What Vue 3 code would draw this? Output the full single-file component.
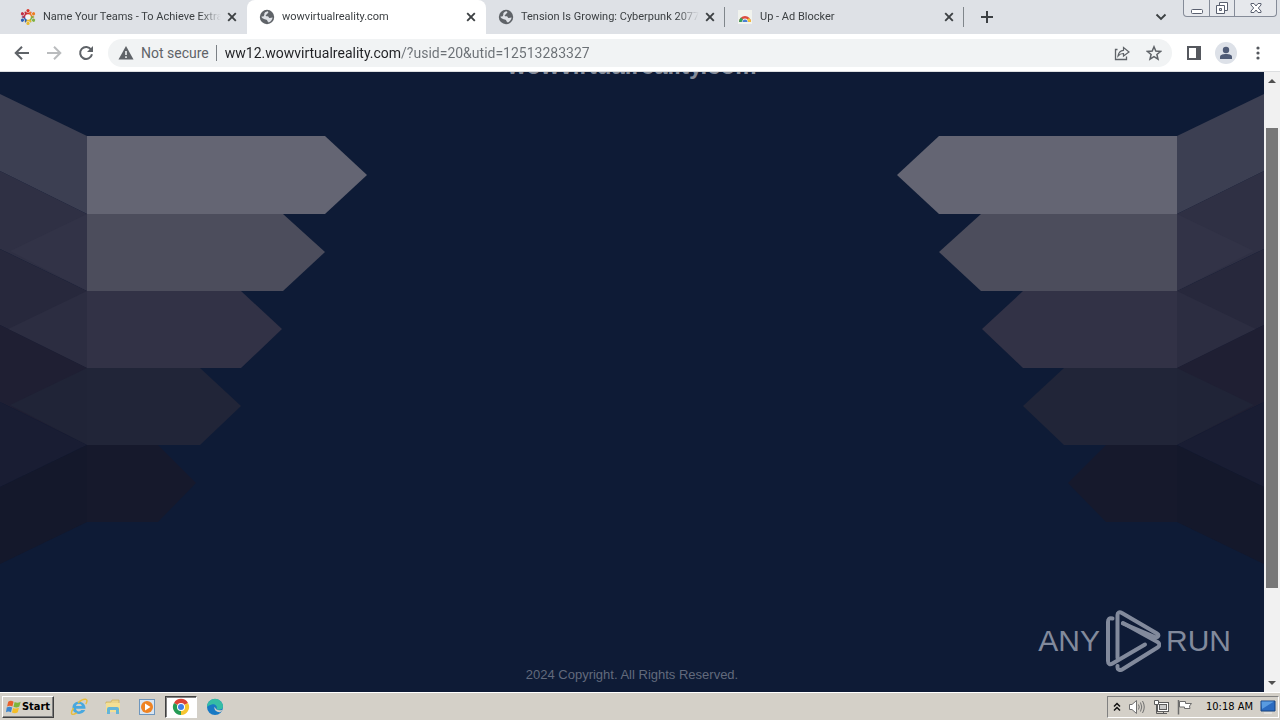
<script setup>
import { ref } from 'vue'

const tabs = [
  { icon: 'ring', title: 'Name Your Teams - To Achieve Extra' },
  { icon: 'globe', title: 'wowvirtualreality.com', active: true },
  { icon: 'globe', title: 'Tension Is Growing: Cyberpunk 2077', line: true },
  { icon: 'rainbow', title: 'Up - Ad Blocker', line: true }
]
const address = ref('ww12.wowvirtualreality.com/?usid=20&utid=12513283327')
const petals = [
  { angle: 0, color: '#d9362b' },
  { angle: 60, color: '#ee7d22' },
  { angle: 120, color: '#7fb241' },
  { angle: 180, color: '#e9b92c' },
  { angle: 240, color: '#2c5fb3' },
  { angle: 300, color: '#c22f45' }
]
const shapes = [
  { points: '0,22 87,64 87,142 0,99', fill: '#3c3f52' },
  { points: '0,99 87,142 87,219 0,177', fill: '#2f3044' },
  { points: '87,142 10,179 87,219', fill: '#323347' },
  { points: '0,177 87,219 87,296 0,253', fill: '#27283c' },
  { points: '87,219 8,257 87,296', fill: '#2c2d41' },
  { points: '0,253 87,296 87,373 0,330', fill: '#1f1f33' },
  { points: '87,296 10,333 87,373', fill: '#202437' },
  { points: '0,330 87,373 0,415', fill: '#191d33' },
  { points: '0,415 87,373 87,450 0,492', fill: '#14182b' },
  { points: '87,64 325,64 367,103 325,142 87,142', fill: '#646573' },
  { points: '87,142 283,142 325,180 283,219 87,219', fill: '#4c4d5c' },
  { points: '87,219 241,219 282,257 241,296 87,296', fill: '#323246' },
  { points: '87,296 200,296 241,334 200,373 87,373', fill: '#212538' },
  { points: '87,373 158,373 196,411 158,450 87,450', fill: '#16192c' }
]
</script>

<template>
  <div class="screen">
    <header class="strip">
      <div class="tabs" role="tablist">
        <div v-for="tab in tabs" :key="tab.title" class="tab" :class="{ active: tab.active, line: tab.line }">
          <button class="pick" role="tab" :aria-selected="!!tab.active">
            <svg v-if="tab.icon === 'ring'" class="fav" viewBox="0 0 16 16">
              <g v-for="p in petals" :key="p.angle" :transform="`rotate(${p.angle} 8 8)`" :fill="p.color">
                <circle cx="8" cy="1.6" r="1.6" />
                <path d="M4 2.800L8 3.800L12 2.800L9.600 6.200H6.400Z" />
              </g>
              <circle cx="8" cy="8" r="2.800" fill="#f3f4f6" />
            </svg>
            <svg v-else-if="tab.icon === 'globe'" class="fav" viewBox="0 0 16 16">
              <circle cx="8" cy="8" r="7.2" fill="#5f6368" />
              <path d="M8.6 2.2C10 3 9.2 4.2 8.4 4.5C7.4 5 7.6 6 6.7 6.4C6.3 7 7.5 7.3 8.6 7.2C9.8 7.2 9.6 8.8 10.6 8.9C11.8 9 13 8.3 13.6 8.6C13.3 10.8 12 12.8 9.6 13.6C9.3 12.7 8.3 12.7 8.2 11.6C8.2 10.4 7 10.6 5.6 10.2C4.2 9.9 2.6 9 2.4 7.6C2.8 7.4 4.3 7.8 4.8 6.9C5.2 6 5.6 5.6 5.3 4.8C5.1 4 6.8 2.4 8.6 2.2Z" fill="#dee1e6" />
            </svg>
            <svg v-else class="fav" viewBox="0 0 16 16">
              <rect x="1" y="1" width="14" height="14" fill="#f1f3ee" />
              <path d="M2 13A6 6 0 0 1 14 13L11.5 13A3.5 3.5 0 0 0 4.5 13Z" fill="#dd4b3e" />
              <path d="M2 13A6 6 0 0 1 4 8.6L6 10.5L4.5 13Z" fill="#35a35a" />
              <path d="M14 13A6 6 0 0 0 12.4 9L10 10.5L11.5 13Z" fill="#f5c33b" />
              <path d="M5.5 13A2.5 2.5 0 0 1 10.5 13Z" fill="#4a7fd4" />
            </svg>
            <span class="title">{{ tab.title }}</span>
          </button>
          <button class="close" aria-label="Close tab">
            <svg viewBox="0 0 10 10" width="10" height="10"><path d="M1.2 1.2L8.8 8.8M8.8 1.2L1.2 8.8" stroke="#3c4043" stroke-width="1.9" /></svg>
          </button>
        </div>
      </div>
      <button class="plus" aria-label="New tab">
        <svg viewBox="0 0 14 14" width="14" height="14"><path d="M7 1V13M1 7H13" stroke="#3c4043" stroke-width="2" /></svg>
      </button>
      <button class="search" aria-label="Search tabs">
        <svg viewBox="0 0 12 8" width="12" height="8"><path d="M1.5 1.5L6 6L10.500 1.5" fill="none" stroke="#3c4043" stroke-width="1.9" /></svg>
      </button>
      <div class="window">
        <button aria-label="Minimize"><svg viewBox="0 0 14 14" width="14" height="14"><rect x="1.500" y="8.500" width="11" height="4" rx="1" fill="#fff" stroke="#5a6070" /></svg></button>
        <button aria-label="Restore"><svg viewBox="0 0 14 14" width="14" height="14"><path d="M4.500 1.500H12.500V9.500H4.500Z" fill="#fff" stroke="#5a6070" /><path d="M1.500 4.500H9.500V12.500H1.500Z" fill="#fff" stroke="#5a6070" /><path d="M4.500 7.500H6.500V9.500H4.500Z" fill="#dee1e6" stroke="#5a6070" /></svg></button>
        <button class="wide" aria-label="Close window"><svg viewBox="0 0 14 14" width="14" height="14"><path d="M2 2.500H5L7 5L9 2.500H12V4L9.300 7L12 10V11.500H9L7 9L5 11.500H2V10L4.700 7L2 4Z" fill="#fff" stroke="#5a6070" /></svg></button>
      </div>
    </header>

    <nav class="toolbar">
      <button class="tool" aria-label="Back"><svg viewBox="0 0 16 16" width="16" height="16"><path d="M15 8H2M8 1.700L1.700 8L8 14.300" fill="none" stroke="#5f6368" stroke-width="2" /></svg></button>
      <button class="tool" aria-label="Forward"><svg viewBox="0 0 16 16" width="16" height="16"><path d="M1 8H14M8 1.700L14.300 8L8 14.300" fill="none" stroke="#babcbe" stroke-width="2" /></svg></button>
      <button class="tool" aria-label="Reload"><svg viewBox="0 0 16 16" width="16" height="16"><path d="M13.200 4.700A6 6 0 1 0 14 9.300" fill="none" stroke="#5f6368" stroke-width="2" /><path d="M15 1V7H9Z" fill="#5f6368" /></svg></button>
      <div class="omnibox">
        <svg viewBox="0 0 16 14" width="16" height="14"><path d="M8 0L15.500 13.500H0.500Z" fill="#5f6368" /><path d="M8 5V9M8 10.300V12" stroke="#f1f3f4" stroke-width="1.600" /></svg>
        <label class="secure" for="address">Not secure</label>
        <input id="address" v-model="address" class="address" type="text" spellcheck="false" />
        <button class="act" aria-label="Share"><svg viewBox="0 0 16 16" width="16" height="16"><path d="M3.500 4.500H1.500V14.500H12.500V11.500" fill="none" stroke="#5f6368" stroke-width="1.300" /><path d="M4 11C4.500 7.500 6.500 5.500 9.500 5.300V2.500L15 7L9.500 11V8.500C7 8.400 5.500 9.200 4 11Z" fill="none" stroke="#5f6368" stroke-width="1.200" /></svg></button>
        <button class="act" aria-label="Bookmark"><svg viewBox="0 0 16 16" width="16" height="16"><path d="M8 1.800L9.800 6.100L14.500 6.500L10.900 9.500L12 14.100L8 11.700L4 14.100L5.100 9.500L1.500 6.500L6.200 6.100Z" fill="none" stroke="#5f6368" stroke-width="1.500" /></svg></button>
      </div>
      <button class="tool" aria-label="Side panel"><svg viewBox="0 0 14 14" width="14" height="14"><path d="M0 0H14V14H0ZM2 2V12H9V2Z" fill="#55585e" fill-rule="evenodd" /></svg></button>
      <button class="tool" aria-label="Profile"><svg viewBox="0 0 22 22" width="22" height="22"><circle cx="11" cy="11" r="11" fill="#dde1e8" /><circle cx="11" cy="8" r="3.200" fill="#4f5b76" /><path d="M5 17V15C5 12.800 8 12 11 12S17 12.800 17 15V17Z" fill="#4f5b76" /></svg></button>
      <button class="tool menu" aria-label="Menu"><svg viewBox="0 0 4 14" width="4" height="14" fill="#55585e"><circle cx="2" cy="2" r="1.600" /><circle cx="2" cy="7" r="1.600" /><circle cx="2" cy="12" r="1.600" /></svg></button>
    </nav>

    <div class="view">
      <main class="page">
        <svg v-for="side in ['left', 'right']" :key="side" class="art" :class="side" viewBox="0 0 368 500" width="368" height="500">
          <polygon v-for="s in shapes" :key="s.points" :points="s.points" :fill="s.fill" />
        </svg>
        <h1 class="heading">wowvirtualreality.com</h1>
        <div class="mark">
          <span>ANY</span>
          <svg viewBox="0 0 56 62" width="56" height="62" fill="none" stroke="#828a9c" stroke-width="4" stroke-linejoin="round" stroke-linecap="round">
            <path d="M7.500 8.500C4.500 7.500 3 9 3 12V51C3 54 5 55 7.500 53.500L40 34.500" />
            <path d="M12.500 48V5C12.500 2.500 14.500 1.500 16.500 2.800L52 23.500C54.500 25 53 28 50 27L18 13.500" />
            <path d="M12.500 56C12 59.500 14.500 61 17.500 59.300L52.500 37.500C55 36 55 33.500 52.500 32L18 13" />
          </svg>
          <span>RUN</span>
        </div>
        <footer class="copy">2024 Copyright. All Rights Reserved.</footer>
      </main>
      <div class="scroll">
        <svg viewBox="0 0 8 4" width="8" height="4"><path d="M4 0L8 4H0Z" fill="#505050" /></svg>
        <div class="track"><div class="thumb"></div></div>
        <svg viewBox="0 0 8 4" width="8" height="4"><path d="M0 0H8L4 4Z" fill="#505050" /></svg>
      </div>
    </div>

    <div class="taskbar">
      <button class="start">
        <svg viewBox="0 0 18 16" width="16" height="16"><path d="M2.500 2C4.500 .8 6.500 .8 8.500 2L7.200 7.300C5.200 6.200 3.200 6.300 1.200 7.500Z" fill="#e8602c" /><path d="M9.700 2.500C12 3.600 14 3.500 16.500 2.200L15 7.500C12.700 8.800 10.500 8.700 8.400 7.700Z" fill="#7db53c" /><path d="M.8 8.600C2.800 7.500 4.800 7.500 6.900 8.600L5.600 13.800C3.700 12.700 1.700 12.700 0 13.800Z" fill="#3c86cf" /><path d="M8 9C10.200 10.100 12.300 10.100 14.600 8.900L13.200 14C11 15.300 8.800 15.200 6.700 14.200Z" fill="#f4bd27" /></svg>
        <span>Start</span>
      </button>
      <div class="launch">
        <button aria-label="Internet Explorer"><svg viewBox="0 0 18 18" width="18" height="18"><path d="M15.500 10.800H6C6.200 13.600 9.900 14.300 11.300 12.100H15.200C13.500 17.500 2.500 17.500 2.500 9.600S15.900 1.800 15.500 10.800ZM6 8H11.800C11.500 5 6.500 5 6 8Z" fill="#48a8df" fill-rule="evenodd" /><path d="M3.500 10C-.5 16.500 2 17.800 6.700 14.800M8 4.700C14-.5 19.500 .2 15.800 6" fill="none" stroke="#e8bd3d" stroke-width="1.500" /></svg></button>
        <button aria-label="File Explorer"><svg viewBox="0 0 18 18" width="18" height="18"><path d="M2 4H7L8 2H15V6H2Z" fill="#e9d48a" stroke="#caae57" stroke-width=".7" /><path d="M2 5H16V14H2Z" fill="#f3df94" /><path d="M3 16V11Q3 9 5 9H13Q15 9 15 11V16H12V12H6V16Z" fill="#64b5d8" /></svg></button>
        <button aria-label="Media Player"><svg viewBox="0 0 18 18" width="18" height="18"><rect x="1.500" y="1.500" width="15" height="15" fill="#d8e5f2" stroke="#6e96bd" /><circle cx="9" cy="9" r="6" fill="#ef8322" /><path d="M7 5.500L12.500 9L7 12.500Z" fill="#fff" /></svg></button>
        <button class="pressed" aria-label="Chrome"><svg viewBox="0 0 18 18" width="18" height="18"><path d="M9 9L2 5A8 8 0 0 1 16 5Z" fill="#dc4437" /><path d="M9 9L16 5A8 8 0 0 1 9 17Z" fill="#f6c52f" /><path d="M9 9L9 17A8 8 0 0 1 2 5Z" fill="#259b55" /><circle cx="9" cy="9" r="4" fill="#fff" /><circle cx="9" cy="9" r="3" fill="#3f7fe8" /></svg></button>
        <button aria-label="Edge"><svg viewBox="0 0 18 18" width="18" height="18"><circle cx="9" cy="9" r="8" fill="#1879c4" /><path d="M1 9A8 8 0 0 1 17 8.500C17 11.500 13 12.500 10.500 11.200C12 8 8.500 5.700 5.800 6.500C3.600 7 2 8 1 9Z" fill="#35bda5" /><path d="M8.700 8.800C7.500 11.500 10 14 13.800 14.300C14.800 14 15.500 13.500 16.500 11.700C13 13 9.800 12.500 8.700 8.800Z" fill="#d4d0c8" /></svg></button>
      </div>
      <div class="tray">
        <svg viewBox="0 0 8 10" width="8" height="10"><path d="M1 4.500L4 1.500L7 4.500M1 8.500L4 5.500L7 8.500" fill="none" stroke="#111" stroke-width="1.500" /></svg>
        <svg viewBox="0 0 18 16" width="18" height="16" stroke="#707070"><path d="M1.500 5.500H4L8.500 1.500V14.500L4 10.500H1.500Z" fill="#fff" /><path d="M10.500 5.500Q12 8 10.500 10.500M12.500 3.500Q15 8 12.500 12.500M14.500 2Q18 8 14.500 14" fill="none" /></svg>
        <svg viewBox="0 0 16 16" width="16" height="16" stroke="#5c5c5c"><rect x="4.500" y="3.500" width="11" height="9" fill="#fff" /><rect x="6.500" y="5.500" width="7" height="5" fill="#c9c9c9" /><path d="M7 14.500H14M10.500 12V14" /><path d="M1.500 1.500H5.500V5.500H1.500Z" fill="#fff" /><path d="M3.500 6V14.500H7" fill="none" /></svg>
        <svg viewBox="0 0 18 16" width="18" height="16" stroke="#6c6c6c"><path d="M2.500 1V15.500" stroke-width="1.500" /><path d="M3.500 2.500H9.500V4.500H15.500L13.500 7L14 9.500H8.500V8H3.500Z" fill="#fff" /></svg>
        <time class="clock">10:18 AM</time>
        <svg viewBox="0 0 16 14" width="16" height="14"><path d="M1 1H15V11H1Z" fill="#2b6bc0" stroke="#17437f" /><path d="M1.500 1.500H14L2 9Z" fill="#599be0" /><path d="M4 13H12" stroke="#eee" /></svg>
      </div>
    </div>
  </div>
</template>

<style>
body { margin: 0; }
</style>

<style scoped>
* { box-sizing: border-box; }
button { margin: 0; padding: 0; border: 0; background: none; color: inherit; font: inherit; display: flex; align-items: center; justify-content: center; }
svg { display: block; flex: none; }
.screen { display: flex; flex-direction: column; min-height: 100vh; font-family: Roboto, "DejaVu Sans Condensed", sans-serif; font-size: 11px; overflow: hidden; }

.strip { display: flex; height: 34px; padding-left: 8px; background: #dee1e6; color: #3c4043; }
.tabs { display: flex; flex: 0 1 956px; min-width: 0; }
.tab { display: flex; flex: 1 1 0; min-width: 0; align-items: center; padding: 0 10px 0 12px; }
.tab.active { background: #fff; border-radius: 8px 8px 0 0; }
.tab.line { background: linear-gradient(#80868b, #80868b) right center / 1px 20px no-repeat; }
.pick { flex: 1; min-width: 0; height: 34px; gap: 7px; justify-content: flex-start; }
.fav { width: 16px; height: 16px; }
.title { flex: 1; min-width: 0; overflow: hidden; white-space: nowrap; text-align: left; line-height: 16px; mask-image: linear-gradient(to right, #000 88%, transparent); }
.close { width: 10px; height: 16px; margin-left: 6px; }
.plus { width: 46px; }
.search { width: 30px; margin-left: auto; margin-right: 7px; }
.window { display: flex; height: 17px; margin-right: 3px; border: 1px solid #858b98; border-top: 0; border-radius: 0 0 4px 4px; background: #e6e8ec; }
.window button { width: 25px; }
.window button + button { border-left: 1px solid #858b98; }
.window .wide { width: 42px; }

.toolbar { display: flex; align-items: center; height: 38px; padding: 0 14px 0 6px; background: #fff; border-bottom: 1px solid #dcdee0; }
.tool { width: 32px; height: 28px; }
.omnibox { display: flex; align-items: center; flex: 1; min-width: 0; height: 28px; margin: 0 6px; padding: 0 2px 0 10px; border-radius: 14px; background: #f1f3f4; font-size: 14px; }
.secure { margin-left: 7px; padding-right: 7px; border-right: 1px solid #7b8085; color: #5f6368; line-height: 16px; white-space: nowrap; }
.address { flex: 1; min-width: 0; height: 26px; margin-left: 8px; padding: 0; border: 0; outline: 0; font: inherit; color: transparent; background: linear-gradient(to right, #202124 176px, #6b7075 176px); -webkit-background-clip: text; background-clip: text; }
.act { width: 32px; height: 28px; }
.menu { width: 16px; margin-left: 8px; }

.view { display: flex; flex: 1; }
.page { position: relative; flex: 1; min-width: 0; display: flex; flex-direction: column; overflow: hidden; background: #0e1b36; font-family: "Liberation Sans", Arial, sans-serif; }
.art { position: absolute; top: 0; left: 0; }
.art.right { left: auto; right: 0; transform: scaleX(-1); }
.heading { position: relative; margin: -20px 0 0; font-size: 24px; line-height: 28px; text-align: center; color: #848b99; }
.mark { position: relative; display: flex; align-items: center; align-self: flex-end; gap: 5px; margin: auto 33px 0 0; color: #828a9c; font-size: 30px; line-height: 62px; }
.copy { position: relative; padding-bottom: 7px; margin-top: -7px; text-align: center; font-size: 13px; line-height: 20px; color: #626a7c; }
.scroll { display: flex; flex-direction: column; align-items: center; width: 16px; padding: 7px 0; background: #f1f1f1; }
.track { flex: 1; width: 12px; padding: 45px 0 93px; display: flex; }
.thumb { flex: 1; background: #787878; }

.taskbar { display: flex; align-items: center; height: 28px; padding: 0 1px 0 2px; border-top: 1px solid #fff; background: #d4d0c8; color: #000; font-family: "DejaVu Sans Condensed", "DejaVu Sans", sans-serif; }
.start { width: 52px; height: 22px; border: 1px solid; border-color: #fff #404040 #404040 #fff; box-shadow: inset -1px -1px #808080; font-weight: bold; }
.launch { display: flex; margin-left: 9px; gap: 2px; }
.launch button { width: 32px; height: 22px; }
.launch .pressed { background: #fff; border: 1px solid; border-color: #404040 #fff #fff #404040; box-shadow: inset 1px 1px #808080; }
.tray { display: flex; align-items: center; height: 22px; margin-left: auto; padding: 0 2px 0 5px; gap: 7px; border: 1px solid; border-color: #808080 #fff #fff #808080; }
.clock { margin-left: 5px; white-space: nowrap; }
</style>
